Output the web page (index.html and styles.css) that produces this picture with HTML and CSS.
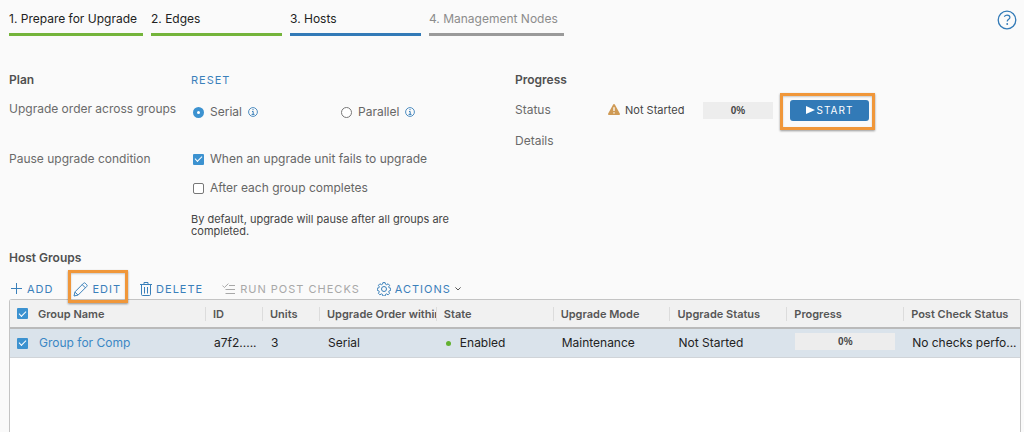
FILE: index.html
```html
<!DOCTYPE html>
<html lang="en">

<head>
    <meta charset="UTF-8">
    <meta name="viewport" content="width=device-width, initial-scale=1.0">
    <title>Upgrade - Hosts</title>
    <link rel="stylesheet" href="styles.css">
</head>

<body>

    <header class="topbar">
        <nav class="steps">
            <a href="#prepare" class="step done">1. Prepare for Upgrade</a>
            <a href="#edges" class="step done">2. Edges</a>
            <a href="#hosts" class="step current">3. Hosts</a>
            <a href="#nodes" class="step">4. Management Nodes</a>
        </nav>
        <button type="button" class="help" aria-label="Help">
            <svg width="20" height="20" viewBox="0 0 20 20" fill="none" stroke="currentColor">
                <circle cx="10" cy="10" r="8.8" stroke-width="1.3" />
                <path d="M7.2 6.6c.8-1 1.7-1.5 2.9-1.5 1.7 0 2.8.9 2.8 2.3 0 1.9-2.7 2-2.7 4.2" stroke-width="1.2" />
                <circle cx="10.2" cy="14" r=".9" fill="currentColor" stroke="none" />
            </svg>
        </button>
    </header>

    <main>
        <div class="summary">
            <section class="plan">
                <h2>Plan</h2>
                <div><button type="button" class="link-btn">RESET</button></div>

                <span class="label">Upgrade order across groups</span>
                <div class="radios">
                    <div class="option">
                        <input type="radio" name="order" id="serial" checked>
                        <label for="serial">Serial</label>
                        <svg class="info" width="10" height="10" viewBox="0 0 10 10" fill="none" stroke="currentColor">
                            <circle cx="5" cy="5" r="4.4" stroke-width=".9" />
                            <path d="M5 2v1.2M4 4.5h1.2v2.8M3.6 7.4h2.9" />
                        </svg>
                    </div>
                    <div class="option">
                        <input type="radio" name="order" id="parallel">
                        <label for="parallel">Parallel</label>
                        <svg class="info" width="10" height="10" viewBox="0 0 10 10" fill="none" stroke="currentColor">
                            <circle cx="5" cy="5" r="4.4" stroke-width=".9" />
                            <path d="M5 2v1.2M4 4.5h1.2v2.8M3.6 7.4h2.9" />
                        </svg>
                    </div>
                </div>

                <span class="label">Pause upgrade condition</span>
                <div class="conditions">
                    <div class="option">
                        <input type="checkbox" id="onFail" checked>
                        <label for="onFail">When an upgrade unit fails to upgrade</label>
                    </div>
                    <div class="option">
                        <input type="checkbox" id="afterGroup">
                        <label for="afterGroup">After each group completes</label>
                    </div>
                    <p class="hint">By default, upgrade will pause after all groups are completed.</p>
                </div>
            </section>

            <section class="progress">
                <h2>Progress</h2>
                <div class="status-row">
                    <span class="label">Status</span>
                    <svg class="warning" width="12" height="12" viewBox="0 0 12 12">
                        <path d="M6 0c.5 0 .8.300 1 .7l4.800 8.800c.4.800 0 1.600-.9 1.600H1.100c-.9 0-1.300-.8-.9-1.600L5 .7c.2-.4.500-.7 1-.7z" fill="#cf9a55" />
                        <path d="M6 3.200v3.800M6 8.200v1.400" stroke="#fff" stroke-width="1.300" />
                    </svg>
                    <span class="status-text">Not Started</span>
                    <span class="bar">0%</span>
                    <button type="button" class="start marked">
                        <svg width="9" height="8" viewBox="0 0 9 8"><path d="M0 0l9 4-9 4z" fill="#fff" /></svg>
                        START
                    </button>
                </div>
                <span class="label">Details</span>
            </section>
        </div>

        <h2 class="groups-title">Host Groups</h2>

        <div class="toolbar">
            <button type="button" class="link-btn add">
                <svg width="12" height="12" viewBox="0 0 12 12" fill="none" stroke="currentColor"><path d="M5.500 0v11M0 5.500h11" /></svg>
                ADD
            </button>
            <button type="button" class="link-btn edit marked">
                <svg width="15" height="15" viewBox="0 0 15 15" fill="none" stroke="currentColor" stroke-linejoin="round">
                    <path d="M1 14l1-4.200L10.600 1.200c.5-.5 1.100-.5 1.600 0l1.600 1.600c.5.500.5 1.100 0 1.600L5.200 13z" />
                    <path d="M9.200 2.600l3.200 3.200M2.100 10.200l2.800 2.700" />
                </svg>
                EDIT
            </button>
            <button type="button" class="link-btn delete">
                <svg width="12" height="14" viewBox="0 0 12 14" fill="none" stroke="currentColor">
                    <path d="M0 2.500h12M4 2.500v-2h4v2M1.500 2.500v10c0 .6.400 1 1 1h7c.6 0 1-.4 1-1v-10" />
                    <path d="M4.500 5v6.500M7.500 5v6.500" />
                </svg>
                DELETE
            </button>
            <button type="button" class="link-btn checks" disabled>
                <svg width="14" height="12" viewBox="0 0 14 12" fill="none" stroke="currentColor">
                    <path d="M.4 2.500l2 2L6.400.6M7 2.500h6M3.500 6.500h9.500M3.500 10.500h9.500" />
                </svg>
                RUN POST CHECKS
            </button>
            <button type="button" class="link-btn actions">
                <svg width="14" height="14" viewBox="0 0 14 14" fill="none" stroke="currentColor" stroke-linejoin="round">
                    <path d="M5.900.600h2.200l.4 1.600 1.100.5 1.500-.9 1.500 1.500-.9 1.500.5 1.100 1.500.3v2.200l-1.500.400-.5 1.100.9 1.400-1.500 1.500-1.500-.9-1.100.5-.4 1.600H5.900l-.4-1.600-1.100-.5-1.500.9-1.500-1.500.9-1.400-.5-1.100-1.500-.4V6.200l1.500-.3.500-1.100-.9-1.500 1.500-1.500 1.500.9 1.100-.5z" />
                    <circle cx="7" cy="7" r="2.500" />
                </svg>
                ACTIONS
                <svg class="caret" width="6" height="4" viewBox="0 0 6 4" fill="none" stroke="#565656"><path d="M.4.400L3 3 5.600.4" /></svg>
            </button>
        </div>

        <div class="datagrid">
            <table>
                <colgroup>
                    <col class="col-check">
                    <col class="col-name">
                    <col class="col-small">
                    <col class="col-small">
                    <col span="6">
                </colgroup>
                <thead>
                    <tr>
                        <th class="check"><input type="checkbox" aria-label="Select all" checked></th>
                        <th>Group Name</th>
                        <th>ID</th>
                        <th>Units</th>
                        <th>Upgrade Order within</th>
                        <th>State</th>
                        <th>Upgrade Mode</th>
                        <th>Upgrade Status</th>
                        <th>Progress</th>
                        <th>Post Check Status</th>
                    </tr>
                </thead>
                <tbody>
                    <tr>
                        <td class="check"><input type="checkbox" aria-label="Select Group for Comp" checked></td>
                        <td><a href="#group">Group for Comp</a></td>
                        <td>a7f2.....</td>
                        <td>3</td>
                        <td>Serial</td>
                        <td><span class="dot"></span>Enabled</td>
                        <td>Maintenance</td>
                        <td>Not Started</td>
                        <td><span class="bar">0%</span></td>
                        <td>No checks perfo...</td>
                    </tr>
                </tbody>
            </table>
        </div>
    </main>

</body>

</html>
```
FILE: styles.css
```css
* {
    box-sizing: border-box;
}

body {
    display: flex;
    flex-direction: column;
    height: 100vh;
    margin: 0;
    padding: 0 3px 0 9px;
    overflow: hidden;
    background-color: #fafafa;
    color: #565656;
    font-family: Inter, "Liberation Sans", sans-serif;
    font-size: 12px;
    line-height: 16px;
}

h2 {
    margin: 0;
    font-size: 12px;
    font-weight: 600;
    color: #505050;
}

button {
    border: 0;
    padding: 0;
    background: none;
    font: inherit;
    cursor: pointer;
}

a {
    color: #3a87c4;
    text-decoration: none;
}

svg {
    flex: none;
}

/* steps */
.topbar {
    display: flex;
    justify-content: space-between;
    align-items: flex-start;
    padding-top: 10px;
}

.steps {
    display: flex;
    gap: 8px;
}

.step {
    min-width: 131px;
    height: 26px;
    padding: 1px 6px 0 0;
    border-bottom: 3px solid #9a9a9a;
    color: #8c8c8c;
    white-space: nowrap;
}

.step.done,
.step.current {
    color: #222;
}

.step.done {
    border-color: #74b43b;
}

.step.current {
    border-color: #327ab7;
}

.help {
    display: flex;
    margin-right: 4px;
    color: #327ab7;
}

/* plan and progress */
main {
    flex: 1;
    display: flex;
    flex-direction: column;
    min-height: 0;
    padding-top: 36px;
}

.summary {
    display: grid;
    grid-template-columns: 1fr 1fr;
}

.plan {
    display: grid;
    grid-template-columns: 182px 1fr;
    align-content: start;
}

.label {
    color: #6a6a6a;
}

.plan .label {
    margin-top: 13px;
}

.link-btn {
    display: flex;
    align-items: center;
    color: #3a80ba;
    font-size: 11px;
    letter-spacing: 1px;
}

.radios {
    display: flex;
    height: 34px;
    margin-top: 16px;
}

.radios .option {
    width: 148px;
}

.option {
    display: flex;
    align-items: center;
    gap: 6px;
    height: 16px;
    padding-left: 2px;
    color: #666;
}

.info {
    color: #3a80ba;
}

input[type="radio"],
input[type="checkbox"] {
    appearance: none;
    flex: none;
    width: 11px;
    height: 11px;
    margin: 0;
    border: 1px solid #777;
    border-radius: 2px;
    background-color: #fff;
}

input[type="radio"] {
    border-radius: 50%;
}

input[type="radio"]:checked {
    border: 4px solid #3c92d0;
}

input[type="checkbox"]:checked {
    display: grid;
    place-items: center;
    border: 0;
    border-radius: 1px;
    background-color: #3c92d0;
}

input[type="checkbox"]:checked::before {
    content: "";
    width: 6px;
    height: 3px;
    margin-bottom: 2px;
    border: solid #fff;
    border-width: 0 0 1px 1px;
    transform: rotate(-45deg);
}

.conditions {
    display: flex;
    flex-direction: column;
    gap: 13px;
    margin-top: 13px;
}

.hint {
    max-width: 270px;
    margin: 4px 0 0;
    color: #454545;
    font-size: 11px;
    line-height: 12px;
}

.status-row {
    display: flex;
    align-items: center;
    height: 22px;
    margin: 11px 0 12px;
}

.status-row .label {
    width: 93px;
}

.status-text {
    width: 83px;
    padding-left: 5px;
    color: #454545;
    font-size: 11px;
    white-space: nowrap;
}

.bar {
    display: block;
    width: 70px;
    height: 17px;
    background-color: #ededed;
    color: #454545;
    font: bold 10px/17px "Liberation Sans", sans-serif;
    text-align: center;
}

.start {
    display: flex;
    align-items: center;
    justify-content: center;
    gap: 2px;
    width: 79px;
    height: 21px;
    margin-left: 17px;
    border-radius: 3px;
    background-color: #327ab7;
    color: #fff;
    font-size: 10px;
    letter-spacing: 1px;
}

/* orange callout drawn round a button */
.marked {
    position: relative;
}

.marked::after {
    content: "";
    position: absolute;
    z-index: 1;
    inset: -7px -6px -9px -10px;
    border: 3px solid #f0973a;
    box-shadow: 0 1px 2px rgba(0, 0, 0, 0.4), inset 0 1px 2px rgba(0, 0, 0, 0.2);
}

/* host groups */
.groups-title {
    margin-top: 13px;
}

.toolbar {
    display: flex;
    height: 16px;
    margin: 15px 0 2px;
    padding-left: 2px;
}

.toolbar .link-btn {
    gap: 4px;
}

.edit {
    margin-left: 20px;
}

.edit.marked::after {
    inset: -11px -7px -6px -5px;
}

.delete {
    margin-left: 19px;
}

.checks {
    margin-left: 19px;
}

.checks:disabled {
    color: #a8a8a8;
}

.actions {
    margin-left: 17px;
}

.datagrid {
    flex: 1;
    border: 1px solid #c4c4c4;
    border-bottom: 0;
    border-radius: 3px 3px 0 0;
    background-color: #fff;
}

table {
    width: 100%;
    table-layout: fixed;
    border-collapse: separate;
    border-spacing: 0;
}

.col-check {
    width: 20px;
}

.col-name {
    width: 175px;
}

.col-small {
    width: 57px;
}

th,
td {
    height: 29px;
    padding: 0 0 0 8px;
    overflow: hidden;
    text-align: left;
    white-space: nowrap;
}

th {
    border-bottom: 2px solid #bababa;
    background: linear-gradient(#dcdcdc, #dcdcdc) left center / 1px 14px no-repeat #f1f1f1;
    color: #565656;
    font-size: 11px;
    font-weight: 600;
}

th:nth-child(-n+2) {
    background-image: none;
}

td {
    border-bottom: 1px solid #d0d4d8;
    background-color: #dae3eb;
    color: #222;
    padding-left: 9px;
}

td .bar {
    width: 100px;
    margin-bottom: 3px;
}

.check {
    padding-left: 7px;
}

.check input {
    display: block;
}

.dot {
    display: inline-block;
    width: 5px;
    height: 5px;
    margin: 0 9px 1px 1px;
    border-radius: 50%;
    background-color: #62b12f;
}
```
